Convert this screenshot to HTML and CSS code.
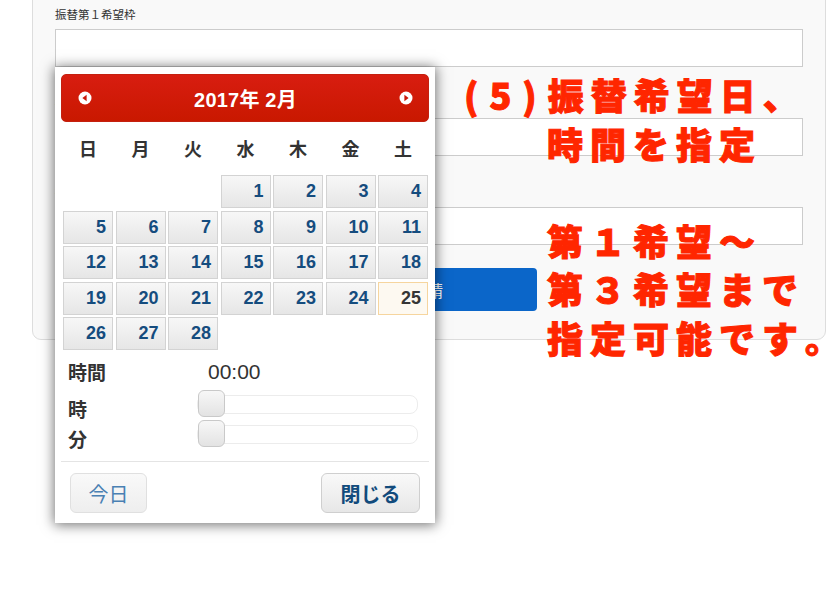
FILE: index.html
```html
<!DOCTYPE html>
<html lang="ja">
    <head>
        <meta charset="UTF-8" />
        <meta name="viewport" content="width=device-width, initial-scale=1.0" />
        <title>振替申請</title>
        <link rel="stylesheet" href="styles.css">
    </head>
    <body>
        <form class="panel">
            <div class="field-group">
                <label class="field-label">振替第１希望枠</label>
                <input type="text" class="field" />
            </div>
            <div class="field-group">
                <label class="field-label">振替第２希望枠</label>
                <input type="text" class="field" />
            </div>
            <div class="field-group">
                <label class="field-label">振替第３希望枠</label>
                <input type="text" class="field" />
            </div>
            <div class="actions">
                <button type="button" class="submit">振替申請</button>
            </div>
        </form>

        <!-- date/time picker popup -->
        <div class="picker">
            <div class="picker-head">
                <svg class="nav" width="14" height="14" viewBox="0 0 14 14">
                    <circle cx="7" cy="7" r="6.5" fill="#fff" />
                    <polygon points="8.6,3.8 4.4,7 8.6,10.2" fill="#c9180a" />
                </svg>
                <span class="month">2017年 2月</span>
                <svg class="nav" width="14" height="14" viewBox="0 0 14 14">
                    <circle cx="7" cy="7" r="6.5" fill="#fff" />
                    <polygon points="5.4,3.8 9.6,7 5.4,10.2" fill="#c9180a" />
                </svg>
            </div>

            <div class="weekdays">
                <span>日</span><span>月</span><span>火</span><span>水</span><span>木</span><span>金</span><span>土</span>
            </div>

            <div class="days">
                <span class="blank"></span><span class="blank"></span><span class="blank"></span>
                <a class="day">1</a><a class="day">2</a><a class="day">3</a><a class="day">4</a>
                <a class="day">5</a><a class="day">6</a><a class="day">7</a><a class="day">8</a><a class="day">9</a><a class="day">10</a><a class="day">11</a>
                <a class="day">12</a><a class="day">13</a><a class="day">14</a><a class="day">15</a><a class="day">16</a><a class="day">17</a><a class="day">18</a>
                <a class="day">19</a><a class="day">20</a><a class="day">21</a><a class="day">22</a><a class="day">23</a><a class="day">24</a><a class="day today">25</a>
                <a class="day">26</a><a class="day">27</a><a class="day">28</a>
            </div>

            <div class="time">
                <div class="time-row">
                    <span class="time-label">時間</span>
                    <span class="time-value">00:00</span>
                </div>
                <div class="time-row slider-row">
                    <span class="time-label">時</span>
                    <div class="slider"><span class="handle"></span></div>
                </div>
                <div class="time-row slider-row second">
                    <span class="time-label">分</span>
                    <div class="slider"><span class="handle"></span></div>
                </div>
            </div>

            <div class="picker-foot">
                <button type="button" class="btn btn-today">今日</button>
                <button type="button" class="btn btn-close">閉じる</button>
            </div>
        </div>

        <div class="note">
            <p class="note-title"><span class="num">(5)</span>振替希望日、<br>時間を指定</p>
            <p>第１希望～<br>第３希望まで<br>指定可能です<span class="last">。</span></p>
        </div>
    </body>
</html>
```

FILE: styles.css
```css
body {
  margin: 0;
  background: #fff;
  font-family: "Liberation Sans", "Noto Sans CJK JP", sans-serif;
  color: #333;
  overflow: hidden;
  height: 600px;
  position: relative;
}

/* form panel */
.panel {
  margin: -10px 0 0 32px;
  width: 794px;
  box-sizing: border-box;
  padding: 17px 22px 28px 22px;
  background: #f9f9f9;
  border: 1px solid #ddd;
  border-radius: 0 0 9px 9px;
}

.field-group + .field-group {
  margin-top: 30px;
}

.field-label {
  display: block;
  font-size: 11.5px;
  line-height: 14px;
  margin-bottom: 7px;
  color: #333;
}

.field {
  display: block;
  width: 100%;
  height: 38px;
  box-sizing: border-box;
  border: 1px solid #ccc;
  background: #fff;
  margin: 0;
}

.actions {
  margin-top: 23px;
  padding-left: 230px;
}

.submit {
  width: 252px;
  height: 43px;
  border: none;
  border-radius: 4px;
  background: #0b66c9;
  color: #fff;
  font-size: 16px;
  font-family: "Noto Sans CJK JP", sans-serif;
}

/* picker */
.picker {
  position: absolute;
  left: 55px;
  top: 67px;
  width: 380px;
  height: 456px;
  box-sizing: border-box;
  padding-top: 7px;
  background: #fff;
  box-shadow: 0 1px 12px 1px rgba(0, 0, 0, 0.55);
}

.picker-head {
  margin: 0 6px;
  height: 48px;
  box-sizing: border-box;
  padding: 0 15px 0 16px;
  display: flex;
  align-items: center;
  justify-content: space-between;
  border: 1px solid #c4200f;
  border-radius: 5px;
  background: linear-gradient(#d81d10, #c91800);
}

.nav {
  display: block;
}

.month {
  color: #fff;
  font-weight: bold;
  font-size: 20px;
  letter-spacing: 0.2px;
}

.weekdays,
.days {
  display: grid;
  grid-template-columns: repeat(7, 1fr);
  column-gap: 2.5px;
  margin: 0 7px 0 8px;
}

.weekdays {
  margin-top: 13px;
  height: 26px;
  line-height: 26px;
  text-align: center;
  font-family: "Noto Sans CJK JP", sans-serif;
  font-weight: bold;
  font-size: 18px;
  color: #333;
}

.days {
  margin-top: 14px;
  row-gap: 2.6px;
  grid-auto-rows: 33px;
}

.day {
  box-sizing: border-box;
  border: 1px solid #d3d3d3;
  background: linear-gradient(#f7f7f7, #e6e6e6);
  text-align: right;
  padding-right: 6px;
  line-height: 31px;
  font-weight: bold;
  font-size: 18px;
  color: #154c7e;
}

.day.today {
  border-color: #f6d59e;
  background: #fdf9f1;
  color: #363636;
}

/* time */
.time {
  margin: 8px 0 0 13px;
}

.time-row {
  display: grid;
  grid-template-columns: 129px 221px;
  height: 26px;
  align-items: center;
}

.time-label {
  font-family: "Noto Sans CJK JP", sans-serif;
  font-weight: bold;
  font-size: 19px;
  color: #333;
}

.time-value {
  padding-left: 11px;
  font-size: 21px;
  color: #333;
}

.slider-row {
  margin-top: 3px;
}

.slider-row .time-label {
  padding-top: 8px;
}

.slider-row.second {
  margin-top: 4px;
  height: 27px;
}

.slider {
  position: relative;
  height: 19px;
  box-sizing: border-box;
  border: 1px solid #ececec;
  border-radius: 8px;
  background: #fff;
}

.handle {
  position: absolute;
  left: 0;
  top: -6px;
  width: 27px;
  height: 27px;
  box-sizing: border-box;
  border: 1px solid #c9c9c9;
  border-radius: 6px;
  background: linear-gradient(#f7f7f7, #e3e3e3);
}

.picker-foot {
  margin: 17px 6px 0;
  padding: 11px 9px 0;
  border-top: 1px solid #e4e4e4;
  display: flex;
  justify-content: space-between;
}

.btn {
  height: 40px;
  box-sizing: border-box;
  border-radius: 6px;
  font-family: "Noto Sans CJK JP", sans-serif;
  font-size: 20px;
  padding: 0;
}

.btn-today {
  width: 77px;
  border: 1px solid #e0e0e0;
  background: linear-gradient(#f9f9f9, #eeeeee);
  color: #4a80b3;
}

.btn-close {
  width: 99px;
  border: 1px solid #cfcfcf;
  background: linear-gradient(#f9f9f9, #e7e7e7);
  color: #124b7c;
  font-weight: bold;
}

/* annotation */
.note {
  position: absolute;
  left: 547px;
  top: 70px;
  white-space: nowrap;
  font-family: "Noto Sans CJK JP", sans-serif;
  font-weight: 900;
  font-size: 36px;
  line-height: 48.5px;
  letter-spacing: 7px;
  color: #ff2600;
  -webkit-text-stroke: 1px #ff2600;
}

.note p {
  margin: 0;
}

.note p + p {
  margin-top: 48.5px;
}

.note-title {
  text-indent: -83px;
}

.num {
  letter-spacing: 11px;
}

.last {
  letter-spacing: 0;
}
```
